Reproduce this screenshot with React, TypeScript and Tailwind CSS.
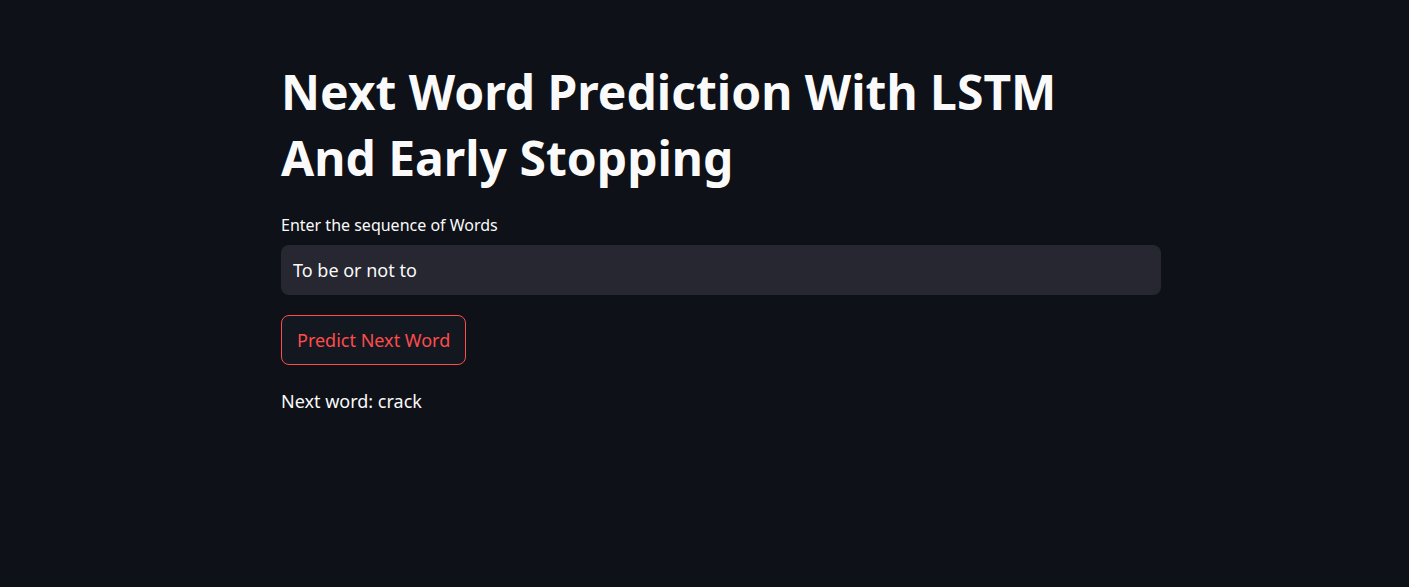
export default function App() {
  return (
    <div className="min-h-[587px] w-full bg-[#0e1117] text-[#fafafa] font-['Noto_Sans','Lato',sans-serif]">
      <div className="ml-[281px] flex w-[880px] flex-col pt-[59px]">
        <h1 className="text-[48px] font-bold leading-[66px]">
          Next Word Prediction With LSTM
          <br />
          And Early Stopping
        </h1>
        <label className="mt-[24px] text-[16px] leading-[20px]">Enter the sequence of Words</label>
        <div className="mt-[10px] flex h-[50px] items-center rounded-[8px] bg-[#262730] px-3">
          <span className="text-[18px]">To be or not to</span>
        </div>
        <div className="mt-[20px]">
          <button className="h-[50px] rounded-[8px] border border-[#ff4b4b] bg-[#131720] px-[15px] text-[18px] text-[#ff4b4b]">
            Predict Next Word
          </button>
        </div>
        <p className="mt-[24px] text-[18px] leading-[24px]">Next word: crack</p>
      </div>
    </div>
  );
}
